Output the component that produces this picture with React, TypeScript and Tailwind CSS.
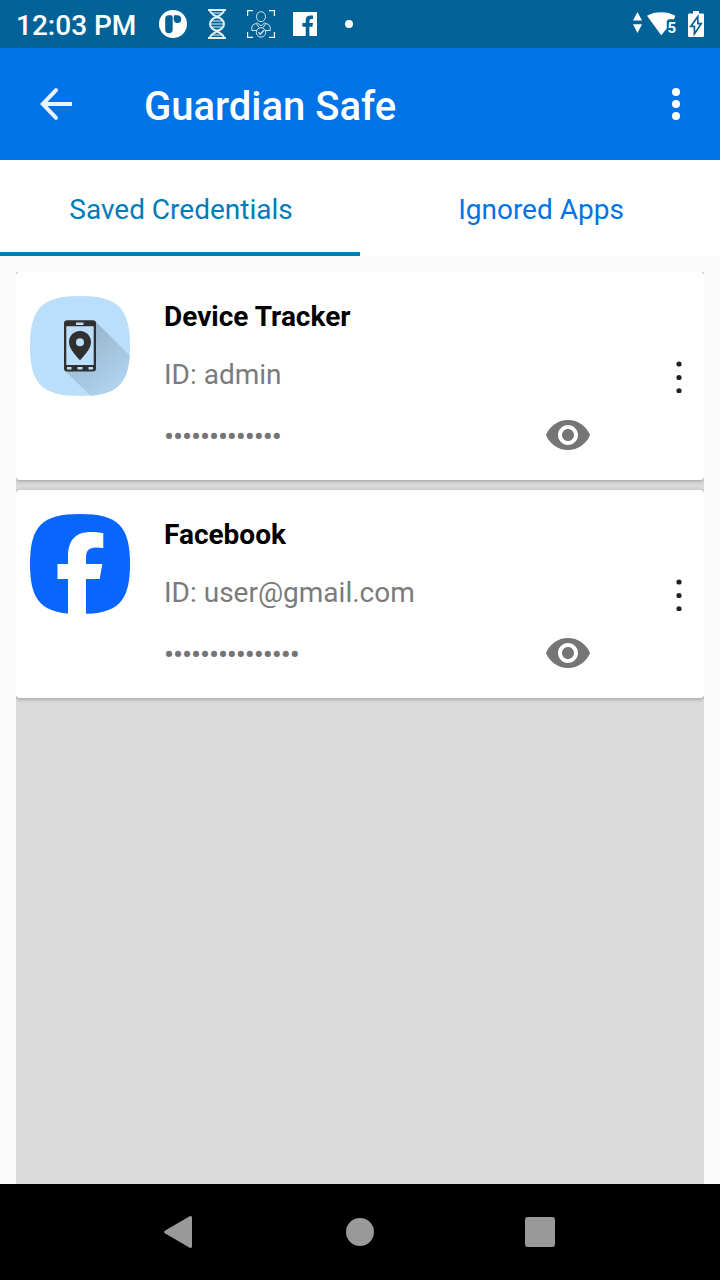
import React from "react";

const SQUIRCLE =
  "M50 0C88 0 100 12 100 50C100 88 88 100 50 100C12 100 0 88 0 50C0 12 12 0 50 0Z";

function StatusBar() {
  return (
    <div className="flex h-12 shrink-0 items-center bg-[#006296] text-white">
      <span className="ml-4 w-[143px] whitespace-nowrap pt-[3px] text-[28px] leading-8 font-medium">
        12:03 PM
      </span>
      <svg className="h-7 w-7" viewBox="0 0 28 28">
        <circle cx="14" cy="14" r="14" fill="#fff" />
        <path
          d="M9.5 5.3H12.2Q13.7 5.3 13.7 7V19.5Q13.7 23.3 10 23.3Q6.2 23.3 6.2 19.5V8.8Q6.2 5.3 9.5 5.3Z"
          fill="#006296"
        />
        <path d="M15 5.3H18.2A3.8 3.8 0 1 1 14.6 9.3Z" fill="#006296" />
      </svg>
      <svg className="ml-5 h-8 w-5" viewBox="0 0 20 32" fill="none" stroke="#e4f0f5">
        <path d="M1 2H19M1 30H19" strokeWidth="2" />
        <path
          d="M3 2C3 9 17 8 17 16C17 24 3 23 3 30M17 2C17 9 3 8 3 16C3 24 17 23 17 30"
          strokeWidth="2"
        />
        <path d="M5 5H15M4 13H16M3 16H17M4 19H16M5 27H15M6 22H14M7 10H13" strokeWidth="1.2" />
      </svg>
      <svg className="ml-5 h-7 w-7" viewBox="0 0 28 28" fill="none" stroke="#d5e7ef">
        <path d="M0.6 6V0.6H6M22 .6H27.4V6M27.4 22V27.4H22M6 27.4H.6V22" stroke="#fff" strokeWidth="1.2" />
        <ellipse cx="14" cy="6.7" rx="4.5" ry="5" />
        <path d="M10 20.5H4.8V17Q5 14 10.5 13L14 16L17.5 13Q23 14 23.2 17V20.5H18" />
        <path d="M9.5 14L12 17.5M18.5 14L16 17.5" />
        <circle cx="14" cy="22.4" r="4.7" />
        <path d="M11.5 22.3L13.3 24.3L17 20.3" strokeWidth="1.3" />
      </svg>
      <svg className="ml-[18px] h-6 w-6" viewBox="0 0 24 24">
        <path d="M0 0H24V24H0Z" fill="#fff" />
        <path
          d="M12.7 24V14.7H9.4V11H12.7V8.2Q12.7 3.4 17.5 3.4H20V7H18.3Q16.4 7 16.4 8.9V11H20L19.4 14.7H16.4V24Z"
          fill="#006296"
        />
      </svg>
      <span className="ml-7 size-2 rounded-full bg-white" />
      <svg className="mb-1 ml-auto h-[21px] w-[9px]" viewBox="0 0 9 21" fill="#fff">
        <path d="M4.5 0L9 8.5H0ZM0 12.2H9L4.5 21Z" />
      </svg>
      <svg className="ml-[5px] h-8 w-[30px]" viewBox="0 0 30 32" fill="#fff">
        <path d="M0 7.8C8 3.2 20 3.2 28.3 7.8L27 11.3H21.5L19.8 13V20.5L14.2 27.3Z" />
        <text x="20.5" y="24.9" fontSize="15" fontWeight="700" fontFamily="Roboto, sans-serif">
          5
        </text>
      </svg>
      <svg className="mr-4 ml-[11px] h-[26px] w-4" viewBox="0 0 16 26">
        <path d="M1.2 2.6H5V0H11V2.6H14.8Q16 2.6 16 3.8V24.8Q16 26 14.8 26H1.2Q0 26 0 24.8V3.8Q0 2.6 1.2 2.6Z" fill="#fff" />
        <path
          d="M9.8 5.6L2.8 15.4H6.4V23L13.2 12.6H9.8Z"
          fill="#fff"
          stroke="#006296"
          strokeWidth="1.7"
        />
      </svg>
    </div>
  );
}

function AppBar() {
  return (
    <header className="flex h-28 shrink-0 items-center bg-[#0073e7] text-white">
      <svg className="ml-10 h-8 w-8" viewBox="0 0 32 32" fill="none" stroke="#eaf2fc">
        <path d="M32 16H3" strokeWidth="4" />
        <path d="M16 2.2L2.8 16L16 29.8" strokeWidth="4" strokeLinecap="round" />
      </svg>
      <h1 className="ml-[72px] pt-1.5 text-[40px] leading-[48px] font-medium">Guardian Safe</h1>
      <svg className="mr-10 ml-auto h-8 w-2" viewBox="0 0 8 32" fill="#fff">
        <circle cx="4" cy="4" r="4" />
        <circle cx="4" cy="16" r="4" />
        <circle cx="4" cy="28" r="4" />
      </svg>
    </header>
  );
}

function Tabs() {
  return (
    <nav className="grid h-24 shrink-0 grid-cols-2 bg-white text-center text-[28px] leading-[33px]">
      <div className="border-b-4 border-[#007cc1] pt-[33px] pl-0.5 text-[#007cba]">Saved Credentials</div>
      <div className="pt-[33px] pl-0.5 text-[#0073e7]">Ignored Apps</div>
    </nav>
  );
}

function TrackerIcon() {
  return (
    <svg className="size-[100px]" viewBox="0 0 100 100">
      <defs>
        <clipPath id="tracker-clip">
          <path d={SQUIRCLE} />
        </clipPath>
        <linearGradient id="tracker-shadow" x1="50" y1="40" x2="88" y2="88" gradientUnits="userSpaceOnUse">
          <stop offset="0" stopColor="#9ab5ca" />
          <stop offset="1" stopColor="#afd2ee" />
        </linearGradient>
      </defs>
      <g clipPath="url(#tracker-clip)">
        <path d="M0 0H100V100H0Z" fill="#bbdefb" />
        <path d="M65 25L105 65V105H66L35 75Z" fill="url(#tracker-shadow)" />
      </g>
      <path
        d="M37 24.3H63Q66 24.3 66 27.3V72.5Q66 75.5 63 75.5H37Q34 75.5 34 72.5V27.3Q34 24.3 37 24.3Z"
        fill="#303030"
      />
      <path d="M36.3 30.3H63.7V69H36.3Z" fill="#bbdefb" />
      <path d="M46 26.6H53.5V29H46ZM37 71H41.5V73.4H37ZM47.5 71H52.5V73.4H47.5ZM58.5 71H63V73.4H58.5Z" fill="#bbdefb" />
      <path
        fillRule="evenodd"
        d="M50 35C43.5 35 39 40 39 46C39 53 45 58.5 50 64.3C55 58.5 61 53 61 46C61 40 56.5 35 50 35ZM50 42.2A4 4 0 1 1 50 50.2A4 4 0 1 1 50 42.2Z"
        fill="#303030"
      />
    </svg>
  );
}

function FacebookIcon() {
  return (
    <svg className="size-[100px]" viewBox="0 0 100 100">
      <path d={SQUIRCLE} fill="#0866ff" />
      <path
        d="M38 100.5V65H27.5V50H38V43C38 26 45.5 18 61 18Q68 18 73.3 19.3V34Q70 33.5 66 33.5C58.5 33.5 56 37 56 44V50H72.3L69.7 65H56V100.5Z"
        fill="#fff"
      />
    </svg>
  );
}

interface Credential {
  name: string;
  id: string;
  length: number;
  icon: React.ReactNode;
}

const credentials: Credential[] = [
  { name: "Device Tracker", id: "admin", length: 13, icon: <TrackerIcon /> },
  { name: "Facebook", id: "user@gmail.com", length: 15, icon: <FacebookIcon /> },
];

function CredentialCard({ name, id, length, icon }: Credential) {
  return (
    <article className="flex h-52 shrink-0 rounded bg-white pt-6 pl-3.5 shadow-[0_1px_4px_rgba(0,0,0,0.3)]">
      {icon}
      <div className="ml-[34px] flex w-[382px] flex-col pt-1 text-[28px] leading-[33px]">
        <h2 className="font-bold text-black">{name}</h2>
        <p className="mt-[25px] text-[#7b7b7b]">ID: {id}</p>
        <p className="mt-[29px] text-[30px] tracking-[-1.14px] text-[#757575]">{"•".repeat(length)}</p>
      </div>
      <svg className="mt-[124px] h-[30px] w-11" viewBox="1 4.5 22 15" fill="#757575">
        <path d="M12 4.5C7 4.5 2.73 7.61 1 12c1.73 4.39 6 7.5 11 7.5s9.27-3.11 11-7.5c-1.73-4.39-6-7.5-11-7.5zM12 17c-2.76 0-5-2.24-5-5s2.24-5 5-5 5 2.24 5 5-2.24 5-5 5zm0-8c-1.66 0-3 1.34-3 3s1.34 3 3 3 3-1.34 3-3-1.34-3-3-3z" />
      </svg>
      <svg className="mt-[65px] mr-[22px] ml-auto h-8 w-1.5" viewBox="0 0 6 32" fill="#212121">
        <circle cx="3" cy="3" r="2.6" />
        <circle cx="3" cy="16.5" r="2.6" />
        <circle cx="3" cy="29.8" r="2.6" />
      </svg>
    </article>
  );
}

function NavigationBar() {
  return (
    <footer className="flex h-24 shrink-0 items-center bg-black">
      <svg className="ml-[164px] h-8 w-7" viewBox="0 0 28 32" fill="#999">
        <path d="M25.2.4Q28-1 28 2V30Q28 33 25.2 31.6L.9 17.3Q-.8 16 .9 14.7Z" />
      </svg>
      <span className="ml-[154px] size-7 rounded-full bg-[#999]" />
      <span className="ml-[151px] size-[30px] rounded-[3px] bg-[#999]" />
    </footer>
  );
}

export default function App() {
  return (
    <div className="flex h-[1280px] w-[720px] flex-col overflow-hidden bg-[#fafafa] font-[Roboto,sans-serif]">
      <StatusBar />
      <AppBar />
      <Tabs />
      <main className="mx-4 mt-4 flex min-h-0 flex-1 flex-col gap-2.5 overflow-hidden bg-[#dbdbdb]">
        {credentials.map((item) => (
          <CredentialCard key={item.name} {...item} />
        ))}
      </main>
      <NavigationBar />
    </div>
  );
}
